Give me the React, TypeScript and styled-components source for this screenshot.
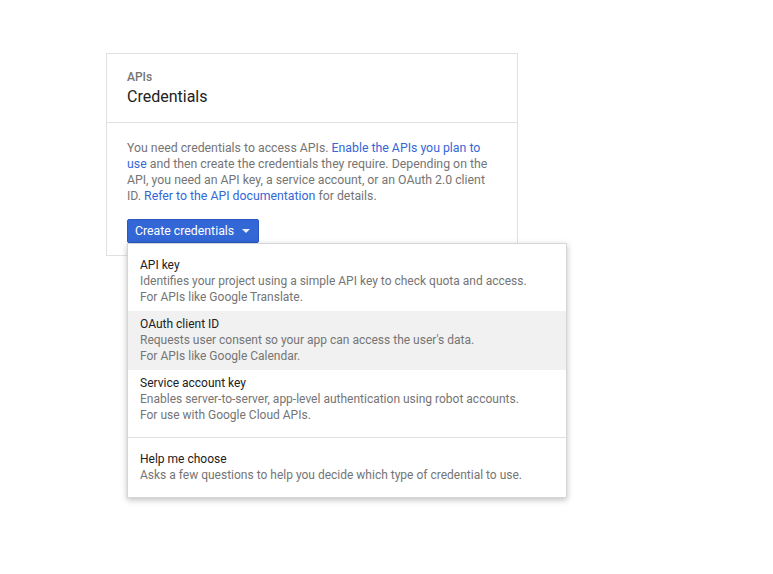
import React from "react";
import styled, { createGlobalStyle } from "styled-components";

const GlobalStyle = createGlobalStyle`
  body {
    margin: 0;
    background: #ffffff;
    font-family: Roboto, "Liberation Sans", Arial, sans-serif;
  }
`;

const Page = styled.div`
  padding: 53px 0 0 106px;
  height: 574px;
  box-sizing: border-box;
`;

const Card = styled.div`
  position: relative;
  width: 412px;
  box-sizing: border-box;
  border: 1px solid #e0e0e0;
  background: #fff;
`;

const CardHeader = styled.div`
  padding: 15px 20px 14px;
  border-bottom: 1px solid #e0e0e0;
`;

const Eyebrow = styled.div`
  font-size: 12px;
  line-height: 16px;
  color: #757575;
  font-weight: 500;
`;

const Title = styled.div`
  margin-top: 1px;
  font-size: 16px;
  line-height: 22px;
  color: #212121;
`;

const CardBody = styled.div`
  padding: 17px 20px 12px;
`;

const Intro = styled.p`
  margin: 0 0 15px;
  font-size: 12.3px;
  line-height: 16px;
  color: #757575;
`;

const Link = styled.a`
  color: #3367d6;
  text-decoration: none;
`;

const Dropdown = styled.div`
  position: relative;
  display: inline-block;
`;

const PrimaryButton = styled.button`
  display: flex;
  align-items: center;
  gap: 8px;
  height: 24px;
  padding: 0 8px 0 7px;
  border: 1px solid #2a56c6;
  border-radius: 2px;
  background: #3367d6;
  color: #fff;
  font-family: inherit;
  font-size: 12.3px;
  cursor: pointer;
`;

const Caret = styled.span`
  width: 0;
  height: 0;
  border-left: 4px solid transparent;
  border-right: 4px solid transparent;
  border-top: 4px solid #fff;
  opacity: 0.9;
`;

const Menu = styled.div`
  position: absolute;
  top: 24px;
  left: 0;
  width: 440px;
  box-sizing: border-box;
  padding: 8px 0 8px;
  background: #fff;
  border: 1px solid #d6d6d6;
  box-shadow: 0 2px 6px rgba(0, 0, 0, 0.25);
  z-index: 10;
`;

const MenuItem = styled.div<{ $active?: boolean }>`
  padding: 5px 12px 6px;
  background: ${(p) => (p.$active ? "#f1f1f1" : "transparent")};
  cursor: pointer;
`;

const ItemTitle = styled.div`
  font-size: 12px;
  line-height: 16px;
  color: #212121;
`;

const ItemDesc = styled.div`
  font-size: 12px;
  line-height: 16px;
  color: #757575;
`;

const Separator = styled.div`
  height: 1px;
  background: #e0e0e0;
  margin: 8px 0 8px;
`;

const items = [
  {
    title: "API key",
    desc: ["Identifies your project using a simple API key to check quota and access.", "For APIs like Google Translate."],
  },
  {
    title: "OAuth client ID",
    desc: ["Requests user consent so your app can access the user's data.", "For APIs like Google Calendar."],
    active: true,
  },
  {
    title: "Service account key",
    desc: ["Enables server-to-server, app-level authentication using robot accounts.", "For use with Google Cloud APIs."],
  },
];

export default function App() {
  return (
    <>
      <GlobalStyle />
      <Page>
        <Card>
          <CardHeader>
            <Eyebrow>APIs</Eyebrow>
            <Title>Credentials</Title>
          </CardHeader>
          <CardBody>
            <Intro>
              You need credentials to access APIs. <Link href="#">Enable the APIs you plan to use</Link> and
              then create the credentials they require. Depending on the API, you need an API key, a service
              account, or an OAuth 2.0 client ID. <Link href="#">Refer to the API documentation</Link> for details.
            </Intro>
            <Dropdown>
              <PrimaryButton>
                Create credentials
                <Caret />
              </PrimaryButton>
              <Menu>
                {items.map((it) => (
                  <MenuItem key={it.title} $active={it.active}>
                    <ItemTitle>{it.title}</ItemTitle>
                    {it.desc.map((d) => (
                      <ItemDesc key={d}>{d}</ItemDesc>
                    ))}
                  </MenuItem>
                ))}
                <Separator />
                <MenuItem>
                  <ItemTitle>Help me choose</ItemTitle>
                  <ItemDesc>Asks a few questions to help you decide which type of credential to use.</ItemDesc>
                </MenuItem>
              </Menu>
            </Dropdown>
          </CardBody>
        </Card>
      </Page>
    </>
  );
}
